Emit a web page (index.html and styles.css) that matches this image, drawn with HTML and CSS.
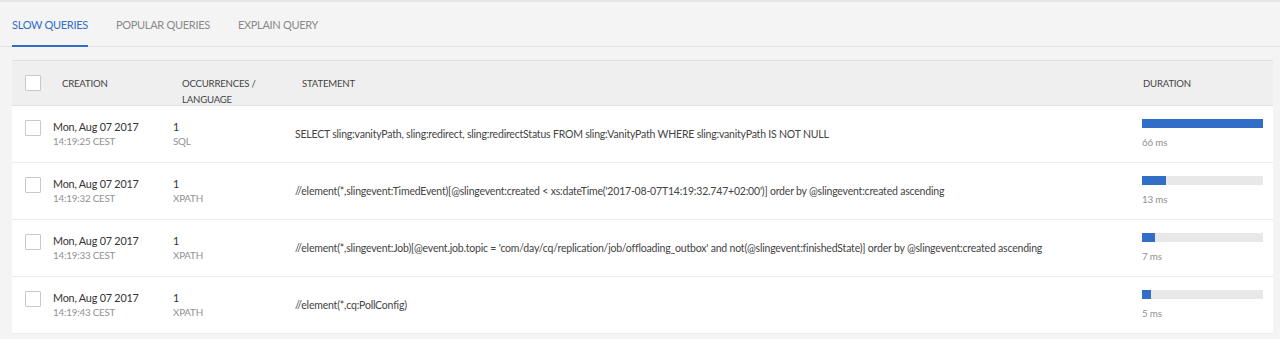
FILE: index.html
```html
<!DOCTYPE html>
<html lang="en">
<head>
  <meta charset="UTF-8" />
  <title>Query Performance</title>
  <link rel="stylesheet" href="styles.css">
</head>
<body>
  <div class="page">
    <nav class="tabs">
      <a class="tab active">SLOW QUERIES</a>
      <a class="tab">POPULAR QUERIES</a>
      <a class="tab">EXPLAIN QUERY</a>
    </nav>

    <div class="query-table">
      <div class="row head">
        <div class="cell check"><span class="box"></span></div>
        <div class="cell">CREATION</div>
        <div class="cell">OCCURRENCES /<br>LANGUAGE</div>
        <div class="cell stmt-head">STATEMENT</div>
        <div class="cell dur-head">DURATION</div>
      </div>

      <div class="row">
        <div class="cell check"><span class="box"></span></div>
        <div class="cell"><div class="main">Mon, Aug 07 2017</div><div class="sub">14:19:25 CEST</div></div>
        <div class="cell"><div class="main">1</div><div class="sub">SQL</div></div>
        <div class="cell stmt">SELECT sling:vanityPath, sling:redirect, sling:redirectStatus FROM sling:VanityPath WHERE sling:vanityPath IS NOT NULL</div>
        <div class="cell"><div class="bar"><div class="fill" style="width: 100%"></div></div><div class="sub">66 ms</div></div>
      </div>

      <div class="row">
        <div class="cell check"><span class="box"></span></div>
        <div class="cell"><div class="main">Mon, Aug 07 2017</div><div class="sub">14:19:32 CEST</div></div>
        <div class="cell"><div class="main">1</div><div class="sub">XPATH</div></div>
        <div class="cell stmt">//element(*,slingevent:TimedEvent)[@slingevent:created &lt; xs:dateTime('2017-08-07T14:19:32.747+02:00')] order by @slingevent:created ascending</div>
        <div class="cell"><div class="bar"><div class="fill" style="width: 20%"></div></div><div class="sub">13 ms</div></div>
      </div>

      <div class="row">
        <div class="cell check"><span class="box"></span></div>
        <div class="cell"><div class="main">Mon, Aug 07 2017</div><div class="sub">14:19:33 CEST</div></div>
        <div class="cell"><div class="main">1</div><div class="sub">XPATH</div></div>
        <div class="cell stmt">//element(*,slingevent:Job)[@event.job.topic = 'com/day/cq/replication/job/offloading_outbox' and not(@slingevent:finishedState)] order by @slingevent:created ascending</div>
        <div class="cell"><div class="bar"><div class="fill" style="width: 11%"></div></div><div class="sub">7 ms</div></div>
      </div>

      <div class="row">
        <div class="cell check"><span class="box"></span></div>
        <div class="cell"><div class="main">Mon, Aug 07 2017</div><div class="sub">14:19:43 CEST</div></div>
        <div class="cell"><div class="main">1</div><div class="sub">XPATH</div></div>
        <div class="cell stmt">//element(*,cq:PollConfig)</div>
        <div class="cell"><div class="bar"><div class="fill" style="width: 7.5%"></div></div><div class="sub">5 ms</div></div>
      </div>
    </div>
  </div>
</body>
</html>
```

FILE: styles.css
```css
* { box-sizing: border-box; }
body {
  margin: 0;
  background: #f4f4f4;
  font-family: Lato, 'Open Sans', sans-serif;
  font-size: 10.5px;
  letter-spacing: -0.2px;
  color: #4b4b4b;
}
.page {
  border-top: 2px solid #e6e6e6;
  padding: 0 7px 0 12px;
}
.tabs {
  display: flex;
  gap: 28px;
  height: 45px;
  border-bottom: 1px solid #e3e3e3;
  margin: 0 -7px 13px -12px;
  padding-left: 12px;
}
.tab {
  display: flex;
  align-items: center;
  height: 45px;
  padding-top: 1px;
  color: #8a8a8a;
  font-size: 11px;
  letter-spacing: -0.3px;
  border-bottom: 2px solid transparent;
  margin-bottom: -1px;
}
.tab.active {
  color: #326ec8;
  border-bottom-color: #326ec8;
}
.query-table {
  background: #fff;
  border-top: 1px solid #e1e1e1;
}
.row {
  display: grid;
  grid-template-columns: 41px 120px 122px 847px 131px;
  height: 57px;
  border-bottom: 1px solid #ececec;
}
.row.head {
  height: 45px;
  background: #efefef;
  border-bottom: 1px solid #e2e2e2;
  font-size: 9.6px;
  color: #444;
}
.cell {
  padding-top: 13px;
  line-height: 15px;
}
.row.head .cell {
  padding: 15px 0 0 9px;
  line-height: 16px;
}
.row.head .cell.check {
  padding: 13px 0 0 13px;
}
.row.head .stmt-head { padding-left: 7px; }
.row.head .dur-head { padding-left: 1px; }
.check { padding-left: 13px; }
.box {
  display: block;
  width: 16px;
  height: 16px;
  margin-top: 1px;
  border: 1px solid #c9c9c9;
  border-radius: 1px;
  background: #fff;
}
.main {
  color: #333;
  font-size: 10.8px;
}
.sub {
  color: #919191;
  font-size: 9.8px;
}
.stmt {
  padding-top: 0;
  display: flex;
  align-items: center;
  color: #444;
  white-space: nowrap;
}
.bar {
  width: 121px;
  height: 9px;
  margin: 0 0 7px;
  background: #e8e8e8;
}
.fill {
  height: 100%;
  background: #326ec8;
}
```
